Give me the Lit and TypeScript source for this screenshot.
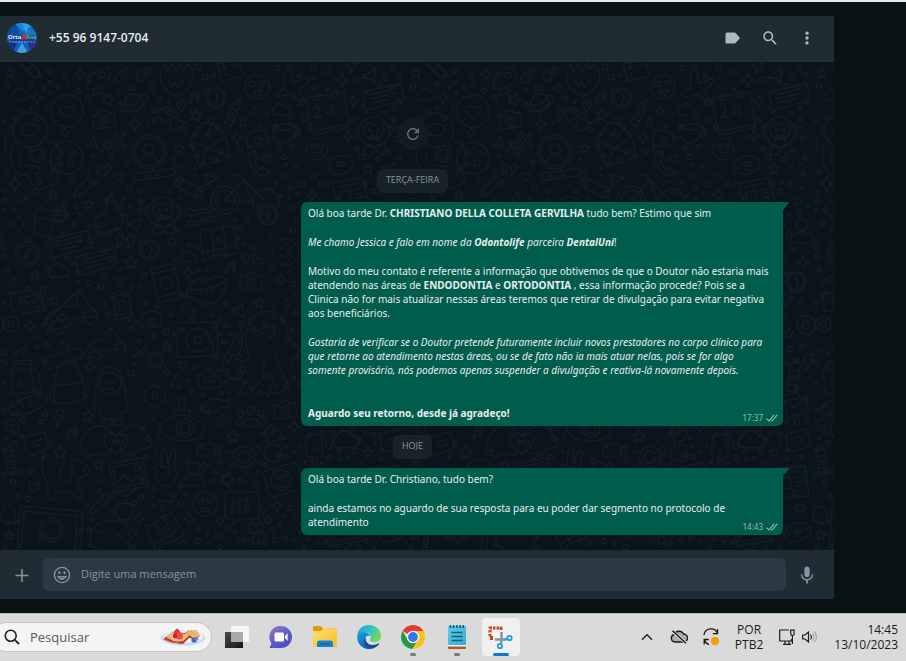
import { LitElement, html, svg, css } from "lit";
import { customElement } from "lit/decorators.js";

/* ---------- wallpaper doodles ---------- */

const ring = (x: number, y: number, r: number) =>
  `M${x - r} ${y}a${r} ${r} 0 1 0 ${2 * r} 0a${r} ${r} 0 1 0 ${-2 * r} 0`;

const flower = (n: number, r: number, k: number) => {
  let d = "";
  for (let i = 0; i <= n; i++) {
    const a = (i / n) * Math.PI * 2;
    const x = (Math.cos(a) * r).toFixed(1);
    const y = (Math.sin(a) * r).toFixed(1);
    d += i ? `A${k} ${k} 0 0 1 ${x} ${y}` : `M${x} ${y}`;
  }
  return d;
};

const HEART = "M0 4C-8-2-3-6 0-2C3-6 8-2 0 4z";

const SHAPES: Record<string, string> = {
  star: "M0-5L1.6-1.6 5.2-1.4 2.4 1.2 3.2 4.8 0 3-3.2 4.8-2.4 1.2-5.2-1.4-1.6-1.6z",
  spark: "M0-6Q.8-.8 6 0Q.8.8 0 6Q-.8.8-6 0Q-.8-.8 0-6z",
  heart: HEART,
  cloud: "M-6 5a4 4 0 0 1 0-7a6 6 0 0 1 11-1a4 4 0 0 1 1 8z",
  capsule: "M-3-6a3 3 0 0 1 6 0V6a3 3 0 0 1-6 0zM-3 0H3",
  rocket: "M-12 10C-14 2-6-12 8-12C14-2 6 8-6 10zM-9 2L-14 2-10-6-4-6M2 8L2 14-6 16-7 10" + ring(2, -4, 3),
  comet: "M-6 6a4 4 0 0 0 6 0L8-6M-6 6a4 4 0 0 1 0-6L4-8M-1 1L6-8",
  flame: "M0 15C-24 2-16-12-12-18L-10-10-4-19-1-11 5-20 6-12 12-18C18-10 22 2 0 15zM-8-2L-5 5-2 0 1 5 5 0 8-3",
  calc: "M-13-8L8-12 14 4-8 9zM-8-4L-4-5M-6-6.500L-5.500-2.500M2-6L6-7M-6 3L-3 2",
  emoji: ring(0, 0, 12) + "M-7-1C-11-5-6-7-5-4C-3-7 0-4-3 0zM3-2C0-6 4-7 5-5C8-7 9-4 6-1zM-4 4Q1 5 5 3Q4 9 0 8Q-3 8-4 4",
  plane: "M-3-19C1-20 3-10 3-5L14-10C20-11 20-6 16-5L8 1 14 12 11 14 1 5-12 8-14 5-5-1C-7-8-6-16-3-19z",
  badge: flower(13, 15, 4) + "M0 7C-13-2-5-8 0-3C5-8 13-2 0 7z",
  planet: ring(0, 0, 9) + "M-8-1C-22 14 2 8 10 1C20-8 8-8 6-7M-8 2Q0 4 8-4",
  pin: "M0 6C-6-1-5-6 0-6C5-6 6-1 0 6z" + ring(0, -2, 1.5),
  music: "M-3 4V-4L4-6V2M-3-1L4-3" + ring(-4.5, 4, 1.6) + ring(2.5, 2, 1.6),
  clock: ring(0, 0, 10) + ring(0, 0, 8) + "M-1-5Q5 0-1 5L2 0z" + ring(-9, -8, 2),
  bottle: "M-4-10H4V14H-4zM-4-4H4M-4 8H4M-2-10V-14H2V-10M0 0q-3 4 0 5q3-1 0-5",
  camera: "M-11-6H-4L-3-9H4L5-6H11V8H-11z" + ring(0, 1, 5) + ring(0, 1, 2) + "M-9-4H-7",
  glasses: "M-16-10L-2-8Q0-10 2-8L14-7M-16-10C-17 0-6 4-2-6M0-6C-2 6 8 10 12-4M-14-9L-10-14 4-12M12-5L15-11",
  envelope: "M-20-4L-8-22Q0-24 6-18L16-8 20 12-10 22zM-20-4L-2 3 16-8M-10 22L-2 3 20 12M-6-8L0-16M-2-5L6-14",
  drop: "M0-4C4 1 3 4 0 4C-3 4-4 1 0-4z",
  cup: "M-12-5Q0-12 12-7Q8 10-2 10Q-10 10-12-5zM-12-5Q0 0 12-7M11-4C18-6 16 4 8 4",
  cushion: "M-9 7C-14-4-6-9 0-9C8-9 13-4 9 7zM1 5C-5 1-2-3 1 0C4-3 8 1 1 5z",
  astro: ring(-3, -20, 17) + "M-12-18C-12-28 4-28 6-22C6-14-6-12-12-18zM-17-10C-26 0-22 14-18 20C-14 30-6 20-4 28C0 42 12 40 14 36C30 36 28 22 18 18L18 8M-13 2V16L4 16C10 20 6 24 2 24M14-8C30-8 32 14 18 20" + ring(4, 4, 8) + ring(4, 4, 5) + "M-20-18C-30-16-30-4-26 4",
  cookie: ring(0, 0, 16) + ring(-6, -5, 2) + ring(4, 5, 3) + ring(7, -5, 2) + ring(-6, 6, 2) + "M-2-10l3-1M-10 0l2 2M1-2l2 1",
  tri: "M-5 4L2-6 5 5 1 2z",
  checks: "M-11 3L-5 9 4-8 1-9-5 3-9 1zM-1 8L3 10 12-7 9-8z",
  person: ring(0, 0, 17) + ring(0, 0, 14) + ring(0, -3, 5) + "M-9 10C-7 2 7 2 9 10",
  call: "M-9-12C-14-8-6 12 6 12L9 8 4 3 1 5C-3 2-4-1-4-4L-1-7-4-13z",
  quote: "M-6-2a3 3 0 1 1 4 2q0 4-5 5q3-2 2-4zM3-2a3 3 0 1 1 4 2q0 4-5 5q3-2 2-4z",
  pill: "M-20-1Q-20-4-17-4L17-4Q20-4 20-1Q20 3 17 3L-17 3Q-20 3-20-1z" + ring(-10, 0, 1) + ring(-4, 0, 1) + ring(2, 0, 1),
  cursor: "M-6-6L8 0-6 6-3 0z",
  pencil: "M-4-12H4V8L0 14-4 8zM-4-8H4M-4 8H4",
  bike: ring(-15, 12, 14) + ring(-15, 12, 10) + ring(26, 14, 13) + "M-15 12L4-8 26 14M-15 12L12 14 4-8 0-14-8-12M18-6L28-6",
  calendar: "M-20-14L18-20 23 12-14 20zM-12-18v6h5v-6zM6-21v6h5v-6zM-14 20L-12 23 22 16 23 12M-13-3Q-8-9-6-3Q-8 3-12 6L-4 4M6-6L0 2 9 0M7-6L8 5",
  note: "M-20-6L16-14Q20-14 20-10L22 2-14 12-20 10-17 6zM-12-3L12-9M-12 1L14-5M-10 5L8 1",
  monkey: ring(0, 0, 15) + "M-10-2C-10-12-1-10 0-6C2-10 11-12 10-2C10 10-10 10-10-2zM-5 9L-2 2 0 8 3 2 5 9M-14-5C-20-8-20 4-14 5M14-5C20-8 20 4 14 5" + ring(-4, -2, 1) + ring(4, -2, 1) + ring(-5, 18, 5) + ring(7, 17, 5),
  donut: "M-13 3C-14-6-2-11 6-9C16-6 14 3 6 7C-2 12-12 10-13 3zM-4 0Q0-5 4-2Q2 3-4 0M-8 2l-2 2M0 5l3 0M8-4l2 1",
  news: "M-16-12L14-14 18 16-14 18zM-10-7L8-9M-10-2L-1-3 0 8-9 9zM4-2L11-3M5 2L11 1M5 6L12 5",
  thumb: "M-13 2L-7-2C-1-6 0-14-2-20C8-24 8-12 7-6C18-6 14 10 10 12L-5 16Q-14 16-13 2zM-12 6H-4M-12 10H-4",
  glass: "M-10-12L12-10 4 16-12 12zM-10-4L9 0M-2-12L-8-16" + ring(14, -6, 8) + ring(14, -6, 6) + "M14-12V0M8-6H20",
  wrench: "M-14 0C-18-6-8-6-7-2L6-4C8-9 14-6 14-4C12 0 7 0 6-1L-6 2C-8 4-12 4-14 0zM-12 12C-14 6-6 7-5 9L8 5C12 1 15 4 14 7C12 10 8 9 7 8L-5 12z",
  compass: ring(0, 0, 12) + ring(0, 0, 9) + ring(0, -14, 3) + "M-3 5L-1-1 4-6 2 1z",
  map: "M-18-14L-6-12 5-17 16-16 20 10 8 13-4 12-15 18zM-6-12L-4 12M5-17L8 13M-16 10C-4 4 8 10 18-2" + ring(1, -2, 3),
  mobile: "M-11-17H9Q12-17 12-14V15Q12 18 9 18H-9Q-12 18-12 15V-14Q-12-17-9-17M-12-12H12M-12 12H12" + ring(0, 0, 6),
  lips: "M-20-1C-12-14-8-14-1-10C6-16 12-16 20-12C18 12 2 16-6 12C-14 10-16 4-20 5L-20-1C-8-2 8 0 20-12M-6-2V3M0-3V3M6-4V2",
  mails: "M-17-8L7-12 9-6M-17-8L-14 10-8 9M-7-4L14-8 18 8-4 12zM-7-4L4 3 14-8",
  scooter: ring(-14, 15, 7) + ring(18, 5, 7) + "M-27 10C-24-2-12-6-2-6L4-8 7-22 1-16M7-22L14-12C16-4 26-2 26 4L2 6C-2 18-20 20-27 10zM-16 6Q-8 0-4 6Q-10 10-16 6",
  card: "M-9-10L7-14 10 10-6 13zM-4-4Q0-8 4-5Q4 2-1 2Q-5 1-4-4M-4 8L4 7",
  gear: flower(8, 7, 3) + ring(0, 0, 3),
  deck: "M-20-17L19-18 20 16-21 17z" + ring(0, 0, 12) + ring(0, 0, 4) + "M8-6L15 2V14" + ring(-16, -10, 2),
  octo: "M-16 0C-26-30-10-46 2-46C18-46 26-28 20-14C30-18 40-10 30 0C22 4 26 14 34 10M-16 0C-22 8-30 6-26-4C-22-12-20-22-24-26C-34-20-30-12-38-4C-50 18-36 24-20 22C-14 26-26 30-26 36C-10 42-8 20 4 18C16 22 0 32 6 36C20 38 28 24 18 20C20 14 10 6 12-2M-12-26L10-32Q12-20 4-20L1-24-4-24Q-10-16-12-26M2 0Q-4 8 0 18" + ring(-27, 0, 3) + ring(-22, 12, 3),
  lens: ring(0, 0, 8) + ring(0, 0, 5) + "M5 6L12 16 15 13 8 4M-18-6q4-6 5 0q-2 6-5 0M-12-11q4-4 4 2",
  bloom: flower(6, 9, 5) + ring(0, 0, 3),
  milk: "M-14-8L6-9 9 14-12 16zM-14-8L-9-14 6-14 14-4 16 11 9 14M-9-14V-17L6-18V-14M6-9L6-14M-4 2q-4 6 0 7q4-1 0-7",
  pack: "M-13 20C-16-2-12-20 0-22C12-20 16 0 18 16Q2 24-13 20zM-14 4L16 0M-13 8C-22 6-18 18-13 20M17 4C24 2 22 14 18 14M-24-24L12-34Q16-28 14-24L-20-12Q-26-16-24-24z",
  hood: "M-16 10C-14-30-10-34 0-34C14-34 14-16 18 8Q18 12 12 12L11 18Q0 20-9 16L-10 10zM-6 18V24H2V18M4 18V24H12V18" + ring(0, -18, 11) + "M-5-18q2-2 3 0M3-18q2-2 3 0M-3-13q3 3 6 0",
  sub: "M-20 0C-18-12 0-16 12-10C28-4 26 10 12 12C-6 16-20 8-20 0zM-8-11L-6-18H8L9-11M-2-18V-30H4V-18" + ring(4, 0, 9) + ring(4, 0, 5) + "M-20 0L-26-8M-20 0L-25 10",
  fish: "M-14 6C-10-6 4-8 10-2L16-5 14 4 8 3C2 10-8 10-14 6zM-8 0Q-4 4-6 8",
  people: ring(0, -6, 4) + ring(-10, -3, 3) + ring(10, -4, 3) + "M-9 9C-8-1 8-1 9 9zM-9 7H-15Q-15 1-9 1M9 7H15Q15 0 9 0",
  bread: "M-18 8C-24 0-12-4 6-10C20-14 24-4 14 2C2 8-12 14-18 8zM-8-4l3 6M0-7l3 6M8-10l3 6",
  bolt: "M-2-8L5-8 2-2 6-2-3 9-1 2-5 2z",
  leaf: "M-10-8C4-12 10-4 8 8C-4 8-10 2-10-8zM-8-6L14 16M0 0V6M-2-3H4",
  chat: "M-12-6L8-11 13 4-4 12-10 10zM-4-1L6-4M-3 4L5 1",
  hands: "M-36 8C-34-10-20-18-10-12L0-4C8-14 18-18 26-12C34-2 40 6 32 8C26 6 20 16 10 14C2 12 4 4 8 2C2 0-6 2-4 10C-4 18-14 14-20 14C-28 18-36 16-36 8zM-12 0C-12-8-2-8 0-3C4-8 12-6 12 0C10 8 4 10 0 14C-6 10-12 6-12 0zM0 4C-5 1-3-2 0 1C3-2 5 1 0 4z",
  video: "M-11-6H7V6H-11zM7-1L12-4V6L7 3" + ring(-7, -3, 1),
  turtle: flower(7, 10, 6) + ring(0, 0, 6) + "M9-7C16-16 18-4 12-4M-9 5L-15 10M-9-5L-17-4M2 10L2 18M10 4L17 8",
  plant: ring(0, 8, 9) + "M-4 0L-6-18Q0-22 1-14Q8-18 8-10Q6-4 0-4M-6-18Q-12-10-4-6",
  dog: "M-10-8C-8-22 6-24 14-16C22-14 20-2 8-2L8 6 13 14 10 20 4 14-8 10-16 14-16 20H-22L-22 4C-28-6-30-16-26-24M-10-8C-14 4 2 6 2-6L2-18" + ring(14, -10, 1),
  photo: "M-19-12L14-18 20 10-14 16zM-15-9L12-14 16 7-12 12zM-12 9L-4-1 4 6 9 0 15 5M-4-15L6-21 11-17M-10 16L-2 21 8 12" + ring(9, -8, 3),
  peace: "M-10 0C-14-6-6-8-5-3L-4-19Q0-22 1-18L2-6 6-19Q11-20 10-16L8-2C14 6 8 16 0 16C-8 16-10 8-10 0zM-4-3L4-2 4 4",
  user: ring(0, -10, 6) + "M-12 8C-12-6 12-8 12 8z",
  smile: "M-18-8L14-18 18-14 20 12 14 10-8 18-12 14zM-4 5q6 4 10 0q-1 6-5 5" + ring(0, 0, 10) + ring(-2, -3, 2) + ring(4, -4, 2),
  apple: "M0-6C8-10 12 0 6 8Q0 12-5 8C-12 0-8-10 0-6zM0-6Q0-10 4-11",
  box: "M-17-12Q-17-14-14-14H14Q17-14 17-11V11Q17 13 14 13H-2L-9 18-10 13H-14Q-17 13-17 10zM-10-7V7H-8V1H-4V7H-2V-7H-4V-2H-8V-7zM3-2V7H6V-2zM3-7V-5H6V-7z",
  laptop: "M-30-22L28-17Q32-16 32-12L29 26H-34L-31-20zM-27-17L26-12 24 22M-27-17L-30 22M-12 12L-9 3" + ring(0, 2, 12) + ring(0, 2, 9),
  bell: "M-8 4C-6-2-6-8 0-10C7-10 6-2 8 8zM-3 6Q0 10 3 7",
  dino: "M-20 6C-22-12-6-18 8-14L10-18 13-12 17-14 17-7 21-7 18-1 22 2 18 6V20H-10C-6 12-20 12-20 6zM-14-4q3-2 4 0M6 0q3-3 5 1",
  clover: "M0 0C-12-4-8-14 0-8C8-14 12-4 0 0C12-2 14 10 4 8C2 14-10 10 0 0M0 0C-14-2-14 8-6 9M1 2L5 14",
  cross: "M-5-1L-1-1 0-5 2-1 6 0 2 2 1 6-1 2z",
  icecream: "M-8 10V-6C-8-16 8-16 8-6V10zM-2 10V18H3V10M-4 0q4 5 8 0",
};

type Doodle = [string, number, number, number?, number?];

const DOODLES: Doodle[] = [
  ["star", 10, 73], ["capsule", 30, 68, -45, 1.3], ["rocket", 100, 79], ["comet", 122, 76], ["comet", 144, 74, 10],
  ["flame", 177, 82], ["calc", 230, 72], ["emoji", 257, 87], ["plane", 290, 89], ["cloud", 20, 95], ["spark", 37, 98],
  ["badge", 67, 111], ["star", 108, 99, 20, 1.2], ["planet", 134, 103], ["pin", 181, 106], ["music", 195, 97], ["clock", 216, 98],
  ["bottle", 233, 113, 25, 0.9], ["star", 196, 115, 10, 1.2], ["cloud", 280, 110], ["camera", 104, 120, -8], ["spark", 135, 124, 0, 1.1],
  ["glasses", 170, 124, 25], ["envelope", 210, 145], ["drop", 254, 110], ["drop", 243, 122], ["cup", 285, 133],
  ["spark", 237, 138], ["cushion", 257, 139], ["astro", 33, 150], ["cookie", 67, 158], ["spark", 65, 133, 0, 0.8],
  ["tri", 92, 143], ["checks", 114, 141], ["person", 149, 152], ["star", 179, 148], ["call", 259, 164], ["heart", 267, 159, -15],
  ["quote", 102, 170], ["heart", 119, 177], ["pill", 155, 175, -8], ["cursor", 210, 179, -10], ["pencil", 84, 187, 45],
  ["pencil", 189, 188, -60, 1.2], ["bike", 240, 188], ["star", 53, 195], ["spark", 15, 184, 0, 1.2], ["spark", 80, 74],
  ["calendar", 326, 112], ["spark", 342, 80, 0, 1.2], ["note", 382, 98], ["spark", 353, 101], ["monkey", 374, 132],
  ["emoji", 317, 149, 0, 0.9], ["donut", 341, 165], ["star", 368, 169], ["spark", 348, 136], ["news", 350, 193, -8],
  ["tri", 370, 75, 20, 1.4], ["bolt", 352, 65], ["spark", 152, 88, 0, 0.8], ["thumb", 108, 217], ["glass", 46, 221],
  ["star", 89, 204], ["cursor", 136, 224, -50], ["monkey", 163, 212], ["wrench", 200, 213], ["clock", 268, 215],
  ["compass", 27, 254], ["note", 69, 245], ["note", 95, 263], ["quote", 124, 242, 0, 1.2], ["clock", 150, 250],
  ["star", 172, 241, 10], ["map", 218, 243], ["cookie", 286, 252, 0, 0.8], ["cloud", 187, 257], ["star", 131, 262, 0, 1.3],
  ["cloud", 58, 271, 0, 1.2], ["star", 35, 275], ["capsule", 15, 281, 60, 0.8], ["heart", 120, 283], ["mobile", 166, 283, -12],
  ["spark", 188, 273], ["lips", 207, 291], ["camera", 251, 282], ["spark", 281, 280], ["music", 231, 268], ["quote", 249, 260],
  ["mails", 27, 302], ["star", 54, 300], ["scooter", 72, 312], ["card", 122, 307], ["cushion", 151, 320], ["spark", 30, 326],
  ["gear", 11, 324], ["cursor", 240, 311, 60], ["star", 259, 303], ["deck", 198, 340], ["octo", 265, 357], ["scooter", 106, 345, 0, 0.8],
  ["lens", 155, 360], ["bloom", 155, 396], ["star", 167, 347], ["heart", 183, 365], ["milk", 25, 378], ["pack", 68, 382],
  ["hood", 110, 401], ["spark", 90, 367], ["mails", 209, 381, 0, 0.7], ["sub", 181, 428], ["fish", 214, 404],
  ["people", 251, 417], ["camera", 285, 410, -8], ["bread", 28, 405], ["bolt", 59, 418], ["star", 88, 416, 10, 1.1],
  ["leaf", 12, 427, 0, 0.8], ["chat", 36, 443], ["music", 72, 433], ["hands", 116, 440], ["gear", 223, 421, 0, 0.8],
  ["star", 233, 436, 0, 1.2], ["video", 208, 450], ["turtle", 244, 457], ["plant", 273, 445], ["star", 60, 452, 0, 1.3],
  ["bottle", 10, 460, -5], ["dog", 70, 480], ["star", 99, 465], ["photo", 128, 476], ["peace", 166, 470], ["user", 193, 478],
  ["star", 227, 479, 20, 1.4], ["cross", 203, 466], ["smile", 281, 480], ["heart", 34, 487, 0, 1.2], ["pencil", 99, 505, 45, 0.9],
  ["apple", 124, 510], ["cursor", 165, 504, -20], ["emoji", 205, 504], ["box", 242, 506], ["laptop", 51, 528], ["star", 9, 535],
  ["bell", 8, 516], ["dino", 110, 536], ["map", 164, 532, -20, 0.9], ["clover", 256, 533], ["spark", 277, 506],
  ["spark", 139, 519], ["spark", 189, 519], ["spark", 294, 427], ["icecream", 314, 447], ["cloud", 345, 440, 0, 1.5],
  ["star", 368, 452], ["chat", 392, 440], ["user", 396, 235], ["spark", 397, 262], ["bolt", 381, 300], ["gear", 400, 325, 0, 1.2],
  ["star", 383, 333], ["clock", 390, 282], ["bottle", 388, 375, 8, 1.2], ["bolt", 402, 362], ["mails", 385, 405],
  ["news", 385, 480], ["heart", 394, 508], ["cup", 330, 510], ["star", 360, 500], ["spark", 300, 528], ["photo", 345, 530],
  ["donut", 392, 532], ["emoji", 330, 225], ["star", 360, 210], ["spark", 312, 195],
];

const DOTS = (() => {
  let seed = 7;
  const rnd = () => ((seed = (seed * 16807) % 2147483647) / 2147483647);
  const big = new Set(["astro", "octo", "laptop", "hands", "bike", "dog", "hood", "pack", "sub", "scooter"]);
  const placed: number[][] = DOODLES.map(([n, x, y]) => {
    const len = SHAPES[n].length;
    return [x, y, big.has(n) ? 26 : len > 95 ? 17 : 8];
  });
  let d = "";
  for (let i = 0; i < 5000; i++) {
    const x = Math.round(rnd() * 398) + 4;
    const y = Math.round(rnd() * 482) + 66;
    const r = 1.2 + Math.round(rnd() * 4) / 2.2;
    if (placed.every(([a, b, c]) => Math.hypot(a - x, b - y) > c + r + 2)) {
      placed.push([x, y, r + 2]);
      d += ring(x, y, r);
    }
  }
  return d;
})();

@customElement("chat-wallpaper")
class ChatWallpaper extends LitElement {
  static styles = css`
    :host { display: block; overflow: hidden; }
    svg { display: block; width: 100%; height: 100%; }
    .ink { fill: none; stroke: #161e25; stroke-width: 1.1; stroke-linejoin: round; stroke-linecap: round; }
  `;
  render() {
    return html`<svg aria-hidden="true">
      <defs>
        <pattern id="tile" width="406" height="490" patternUnits="userSpaceOnUse">
          <g class="ink" transform="translate(0 -62)">
            ${DOODLES.flatMap(([n, x, y, a = 0, s = 1]) =>
              (x < 30 ? [x, x + 406] : x > 376 ? [x, x - 406] : [x]).map(
                (px) => svg`<path d=${SHAPES[n]} transform=${`translate(${px} ${y}) rotate(${a}) scale(${s})`}></path>`
              )
            )}
            <path d=${DOTS}></path>
          </g>
        </pattern>
      </defs>
      <rect width="100%" height="100%" fill="url(#tile)"></rect>
    </svg>`;
  }
}

/* ---------- chat ---------- */

const avatar = html`<svg class="avatar" viewBox="0 0 30 30" role="img" aria-label="Orto Rise">
  <defs><clipPath id="disc"><circle cx="15" cy="15" r="15"></circle></clipPath></defs>
  <g clip-path="url(#disc)">
    <rect width="30" height="30" fill="#1263b5"></rect>
    <path fill="#1d86d6" d="M8 0h14l-6 9z"></path>
    <path fill="#2aa0e6" d="M15 0l10 2-6 9z"></path>
    <path fill="#0d4c9c" d="M0 4l9-3 3 11-12 2z"></path>
    <path fill="#1a75c9" d="M22 3l8 9-12 1z"></path>
    <path fill="#152f86" d="M0 18l10 2-4 10-6-4z"></path>
    <path fill="#2c2f94" d="M20 19l10-2v9l-6 4z"></path>
    <path fill="#4a9be0" d="M15 20l6 10H9z"></path>
    <path fill="#0f3f91" d="M3 12h24v6H3z"></path>
    <text x="1" y="16" font-family="Noto Sans, sans-serif" font-size="6" font-weight="600" fill="#fff">Orto</text>
    <path d="M15 17l4-6M15.500 12l4 4" stroke="#e0283c" stroke-width="1.600"></path>
    <text x="19" y="16" font-family="Noto Sans, sans-serif" font-size="5" font-weight="600" fill="#6cc04a">Rise</text>
    <path d="M2 19h26" stroke="#b9cbe8" stroke-width="1" stroke-dasharray="2 1" opacity=".6"></path>
  </g>
</svg>`;

const ticks = html`<svg class="ticks" viewBox="0 0 12 8" aria-label="Entregue">
  <path d="M.6 4.600L3 7 8 .8M5.200 6.400L5.900 7 11.200 .8" fill="none" stroke="#8fbdb0" stroke-width="1.100"></path>
</svg>`;

@customElement("chat-panel")
class ChatPanel extends LitElement {
  static styles = css`
    :host { display: flex; flex-direction: column; font-family: "Open Sans", "Noto Sans", sans-serif; font-size: 11px; color: #e9edef; }
    button { appearance: none; border: 0; background: none; padding: 0; display: grid; place-items: center; color: inherit; }
    .icon { width: 18px; height: 18px; display: block; fill: currentColor; }
    header { display: flex; align-items: center; height: 44px; padding: 0 18px 0 7px; background: #202c33; border-bottom: 2px solid #222e35; }
    .avatar { width: 30px; height: 30px; }
    h1 { flex: 1; margin: 0 0 0 12px; font-size: 12px; line-height: 16px; font-weight: 600; }
    .tools { display: flex; gap: 19px; color: #aebac1; }
    main { position: relative; flex: 1; display: flex; flex-direction: column; justify-content: flex-end; background: #0b141a; padding: 16px 0 15px; }
    chat-wallpaper { position: absolute; inset: 0; }
    .log { position: relative; display: flex; flex-direction: column; }
    .refresh { width: 32px; height: 32px; border-radius: 50%; background: #111b21; color: #5f6f78; align-self: center; margin: 0 9px 19px 0; }
    .day { align-self: center; margin: 0 9px 9px 0; padding: 0 9px 2px; border-radius: 6px; background: #182229; color: #8696a0; font-size: 9px; line-height: 22px; }
    .msg { position: relative; align-self: flex-end; box-sizing: border-box; width: 58%; max-width: 482px; margin: 0 51px 9px 0; padding: 4px 7px 6px; background: #005c4b; border-radius: 6px 0 6px 6px; display: grid; font-family: "Noto Sans", "Open Sans", sans-serif; font-size: 10px; line-height: 14px; }
    .msg:last-child { margin-bottom: 0; }
    .msg::after { content: ""; position: absolute; left: 100%; top: 0; width: 6px; height: 8px; background: #005c4b; clip-path: polygon(0 0, 80% 0, 100% 12%, 0 100%); }
    .text { grid-area: 1 / 1; display: grid; gap: 15px; }
    .text p { margin: 0; white-space: nowrap; }
    .text .last { margin-top: 14px; }
    .meta { grid-area: 1 / 1; place-self: end; display: flex; align-items: center; gap: 3px; font-size: 8px; line-height: 10px; color: #99beb7; margin: 0 -2px -3px 0; }
    .ticks { width: 12px; height: 8px; }
    footer { display: flex; align-items: center; height: 49px; padding: 0 18px 0 13px; background: #202c33; color: #8696a0; }
    .field { flex: 1; display: flex; align-items: center; gap: 10px; height: 33px; margin: 0 12px; padding: 0 10px; border-radius: 6px; background: #2a3942; }
    .field input { flex: 1; min-width: 0; border: 0; padding: 0 0 2px; outline: 0; background: none; font: inherit; line-height: 16px; color: #e9edef; }
    .field input::placeholder { color: #8696a0; opacity: 1; }
  `;

  render() {
    return html`
      <header>
        ${avatar}
        <h1>+55 96 9147-0704</h1>
        <div class="tools">
          <button aria-label="Etiquetas"><svg class="icon" viewBox="0 0 18 18"><path d="M3 3.500h7.300c.7 0 1.200.3 1.600.8L16 9l-4.100 4.700c-.4.5-.9.8-1.600.8H3A1.500 1.500 0 0 1 1.500 13V5A1.500 1.500 0 0 1 3 3.500z"></path></svg></button>
          <button aria-label="Pesquisar"><svg class="icon" viewBox="0 0 24 24"><path d="M15.900 14.300H15l-.3-.3c1-1.100 1.600-2.700 1.600-4.300 0-3.700-3-6.700-6.700-6.700S3 6 3 9.700s3 6.700 6.700 6.700c1.600 0 3.200-.6 4.300-1.600l.3.3v.8l5.100 5.100 1.500-1.500-5-5.200zm-6.200 0c-2.600 0-4.600-2.100-4.600-4.600s2.100-4.600 4.600-4.600 4.600 2.100 4.600 4.600-2 4.600-4.600 4.600z"></path></svg></button>
          <button aria-label="Mais opções"><svg class="icon" viewBox="0 0 24 24"><circle cx="12" cy="5.500" r="2.200"></circle><circle cx="12" cy="12" r="2.200"></circle><circle cx="12" cy="18.500" r="2.200"></circle></svg></button>
        </div>
      </header>
      <main>
        <chat-wallpaper></chat-wallpaper>
        <div class="log">
          <button class="refresh" aria-label="Carregar mensagens"><svg class="icon" viewBox="0 0 24 24"><path d="M17.650 6.350C16.200 4.900 14.210 4 12 4c-4.420 0-7.990 3.580-7.990 8s3.570 8 7.990 8c3.730 0 6.840-2.550 7.730-6h-2.080c-.82 2.330-3.040 4-5.650 4-3.310 0-6-2.690-6-6s2.690-6 6-6c1.660 0 3.140.69 4.220 1.780L13 11h7V4l-2.350 2.350z"></path></svg></button>
          <div class="day">TERÇA-FEIRA</div>
          <article class="msg">
            <div class="text">
              <p>Olá boa tarde Dr. <b>CHRISTIANO DELLA COLLETA GERVILHA</b> tudo bem? Estimo que sim</p>
              <p><i>Me chamo Jessica e falo em nome da <b>Odontolife</b> parceira <b>DentalUni</b></i>!</p>
              <p>Motivo do meu contato é referente a informação que obtivemos de que o Doutor não estaria mais<br />atendendo nas áreas de <b>ENDODONTIA</b> e <b>ORTODONTIA</b> , essa informação procede? Pois se a<br />Clinica não for mais atualizar nessas áreas teremos que retirar de divulgação para evitar negativa<br />aos beneficiários.</p>
              <p><i>Gostaria de verificar se o Doutor pretende futuramente incluir novos prestadores no corpo clínico para<br />que retorne ao atendimento nestas áreas, ou se de fato não ia mais atuar nelas, pois se for algo<br />somente provisório, nós podemos apenas suspender a divulgação e reativa-lá novamente depois.</i></p>
              <p class="last"><b>Aguardo seu retorno, desde já agradeço!</b></p>
            </div>
            <div class="meta"><time>17:37</time>${ticks}</div>
          </article>
          <div class="day">HOJE</div>
          <article class="msg">
            <div class="text">
              <p>Olá boa tarde Dr. Christiano, tudo bem?</p>
              <p>ainda estamos no aguardo de sua resposta para eu poder dar segmento no protocolo de<br />atendimento</p>
            </div>
            <div class="meta"><time>14:43</time>${ticks}</div>
          </article>
        </div>
      </main>
      <footer>
        <button aria-label="Anexar"><svg class="icon" viewBox="0 0 18 18"><path d="M8.200 3h1.600v5.700h5.700v1.600H9.800V16H8.200v-5.700H2.500V8.700h5.700z"></path></svg></button>
        <div class="field">
          <button aria-label="Emojis"><svg class="icon" viewBox="0 0 18 18"><circle cx="9" cy="9" r="7.600" fill="none" stroke="currentColor" stroke-width="1.400"></circle><ellipse cx="6.500" cy="6.700" rx="1.100" ry="1.400"></ellipse><ellipse cx="11.500" cy="6.700" rx="1.100" ry="1.400"></ellipse><path d="M4 9.600c1.500.7 8.500.7 10 0-.3 2.500-2.300 4.200-5 4.200s-4.700-1.700-5-4.200zm1.400 1.300c.5.700 1 .9 3.600.9s3.100-.2 3.600-.9c-1.900.3-5.300.3-7.200 0z"></path></svg></button>
          <input type="text" aria-label="Digite uma mensagem" placeholder="Digite uma mensagem" />
        </div>
        <button aria-label="Mensagem de voz"><svg class="icon" viewBox="0 0 24 24"><path d="M12 14.900c2 0 3.500-1.500 3.500-3.500v-7c0-2-1.500-3.600-3.500-3.600S8.500 2.400 8.500 4.400v7c0 2 1.500 3.500 3.500 3.500zm6.200-3.500c0 3.500-2.900 6-6.200 6s-6.200-2.500-6.200-6h-2c0 4 3.200 7.300 7 7.900v3.900h2.400v-3.900c3.900-.6 7-3.900 7-7.900z"></path></svg></button>
      </footer>
    `;
  }
}

/* ---------- taskbar ---------- */

const taskView = svg`
  <defs><linearGradient id="dk" x1="0" y1="0" x2="1" y2="1"><stop offset="0" stop-color="#4a4a4a"></stop><stop offset="1" stop-color="#161616"></stop></linearGradient></defs>
  <rect x="1" y="8" width="18" height="16" fill="url(#dk)"></rect>
  <rect x="7" y="2" width="18" height="16" fill="#f6f6f6"></rect>
  <rect x="7" y="8" width="12" height="10" fill="#a9a9a9"></rect>`;

const chatApp = svg`
  <defs><linearGradient id="ch" x1="0" y1="0" x2=".6" y2="1"><stop offset="0" stop-color="#9c7ac4"></stop><stop offset=".6" stop-color="#5b5bc9"></stop><stop offset="1" stop-color="#4a4fc0"></stop></linearGradient></defs>
  <path d="M13 2a11 11 0 1 1 0 22H1.500l2-4.500A11 11 0 0 1 13 2z" fill="url(#ch)"></path>
  <rect x="6.500" y="8.500" width="9.500" height="9" rx="1.500" fill="#fff"></rect>
  <path d="M17 12l2.600-2.700v7.400L17 14z" fill="#fff"></path>`;

const folder = svg`
  <defs><linearGradient id="fo" x1="0" y1="0" x2="1" y2="1"><stop offset="0" stop-color="#ffdf70"></stop><stop offset="1" stop-color="#fbbd23"></stop></linearGradient></defs>
  <path d="M1 3.500A1.500 1.500 0 0 1 2.500 2h6l2.500 2.500H24a1 1 0 0 1 1 1V12H1z" fill="#dd9c0c"></path>
  <path d="M1 7h8l2.500-2.500H25V22a1 1 0 0 1-1 1H2a1 1 0 0 1-1-1z" fill="url(#fo)"></path>
  <path d="M5 23v-4a2.500 2.500 0 0 1 2.500-2.500h11A2.500 2.500 0 0 1 21 19v4z" fill="#1583d3"></path>
  <path d="M8.500 20h9" stroke="#0c5d9e" stroke-width="1.200"></path>`;

const edge = svg`
  <defs>
    <linearGradient id="e1" x1="0" y1="0" x2="1" y2=".4"><stop offset="0" stop-color="#1d9fe0"></stop><stop offset=".6" stop-color="#35c1c4"></stop><stop offset="1" stop-color="#6fd957"></stop></linearGradient>
    <linearGradient id="e2" x1="0" y1="0" x2=".4" y2="1"><stop offset="0" stop-color="#1b9de2"></stop><stop offset="1" stop-color="#0f63b8"></stop></linearGradient>
  </defs>
  <path d="M1.300 11C2 5 7 1 13 1c7 0 12 5 12 11 0 4-3 6-6.500 6-3 0-4.500-1-4.500-2 0-.8 1-1.200 1-3 0-2.500-2.500-5-6.500-5-4 0-6.500 1.500-7.200 3z" fill="url(#e1)"></path>
  <path d="M1.300 11C2.500 8.500 5.500 7.500 8.500 8c3.500.4 5.500 2.500 6 4.500C12 10.500 9.500 12 9.500 15c0 5 5 8.500 9.500 7.500C17 24.300 15 25 12.500 25 5.500 25 .5 18.500 1.300 11z" fill="url(#e2)"></path>
  <path d="M9.700 14c-.8 3.500 2.300 7 6.800 7 2.500 0 4.500-.7 6-1.700.7-.4 1 .2.600.8C21 23.300 17 25 13.500 24.800 9 24 6.500 17.500 9.700 14z" fill="#134a94"></path>`;

const chrome = svg`
  <path d="M13 13L2.600 7A12 12 0 0 1 23.400 7z" fill="#e33b2e"></path>
  <path d="M2.600 7A12 12 0 0 0 12.500 25L18.200 16 13 13 7.800 16z" fill="#279847"></path>
  <path d="M23.400 7A12 12 0 0 1 12.500 25L18.200 16 18.200 13 13 7z" fill="#fcc21c"></path>
  <circle cx="13" cy="13" r="6.200" fill="#fff"></circle><circle cx="13" cy="13" r="4.900" fill="#3478e5"></circle>`;

const notepad = svg`
  <defs><linearGradient id="np" x1="0" y1="0" x2="1" y2="1"><stop offset="0" stop-color="#5fd0ea"></stop><stop offset="1" stop-color="#39a9cf"></stop></linearGradient></defs>
  <rect x="4" y="21" width="18" height="4" rx="1" fill="#b05a1c"></rect><rect x="4" y="20.500" width="18" height="2" fill="#eef3f5"></rect>
  <rect x="4" y="2" width="18" height="19" rx="1" fill="url(#np)"></rect>
  <path d="M6.500 1v3M9.700 1v3M12.900 1v3M16.100 1v3M19.300 1v3" stroke="#155a70" stroke-width="1.600"></path>
  <path d="M7.500 8.500h11M7.500 12.500h11M7.500 16.500h11" stroke="#12637e" stroke-width="1.500"></path>`;

const snip = svg`
  <rect x=".5" y="2.500" width="13" height="12" fill="#f4f6f8"></rect>
  <path d="M2 14.500h3M2 12.500V10M2 8.500V6M2 4.500V2.500M2 4h2M5 4h2.500M8.500 4H11M11.800 4h1.200V6M2 13.500H5" fill="none" stroke="#d8400f" stroke-width="3"></path>
  <path d="M13.500 8v10M7 15.500h11" stroke="#8a9198" stroke-width="2.400"></path>
  <circle cx="12" cy="22" r="2.200" fill="none" stroke="#1e9be0" stroke-width="1.800"></circle>
  <circle cx="21.500" cy="14" r="2.200" fill="none" stroke="#1e9be0" stroke-width="1.800"></circle>
  <path d="M13 17.500v2.500M16.500 15.300h3" stroke="#2aa3e4" stroke-width="2"></path>`;

const APPS = [
  { name: "Visão de tarefas", art: taskView, state: "" },
  { name: "Chat", art: chatApp, state: "" },
  { name: "Explorador de Arquivos", art: folder, state: "" },
  { name: "Microsoft Edge", art: edge, state: "" },
  { name: "Google Chrome", art: chrome, state: "open" },
  { name: "Bloco de Notas", art: notepad, state: "open" },
  { name: "Ferramenta de Captura", art: snip, state: "active" },
];

@customElement("task-bar")
class TaskBar extends LitElement {
  static styles = css`
    :host { display: flex; align-items: center; box-sizing: border-box; height: 48px; padding-bottom: 1px; background: #dadada; border-top: 1px solid #b9bbbb; color: #1b1b1b; font-family: "Open Sans", "Noto Sans", sans-serif; font-size: 12px; overflow: hidden; }
    button { appearance: none; border: 0; background: none; padding: 0; color: inherit; font: inherit; display: grid; place-items: center; }
    svg { display: block; }
    .search { box-sizing: border-box; display: flex; align-items: center; width: 222px; height: 30px; margin: 0 6px 0 -10px; padding: 0 5px 0 13px; gap: 10px; border: 1px solid #c4c4c4; border-radius: 16px; background: #f4f4f4; }
    .search input { flex: 1; min-width: 0; border: 0; padding: 0 0 1px; outline: 0; background: none; font: inherit; font-size: 13px; color: #333; }
    .search input::placeholder { color: #5a5a5a; opacity: 1; }
    .apps { display: flex; gap: 6px; flex: 1; }
    .app { position: relative; width: 38px; height: 38px; border-radius: 4px; }
    .app svg { width: 26px; height: 26px; }
    .app.open::after, .app.active::after { content: ""; position: absolute; bottom: 0; left: 16px; width: 6px; height: 3px; border-radius: 2px; background: #7a7a7a; }
    .app.active { background: #f0f0f0; }
    .app.active::after { left: 11px; width: 16px; background: #0a78d4; }
    .tray { display: flex; align-items: center; padding-right: 8px; }
    .tray .slot { width: 32px; height: 32px; }
    .two { line-height: 15px; text-align: center; margin: 0 15px 0 8px; }
    .sound { margin-left: 5px; }
    .clock { line-height: 15px; text-align: right; margin-left: 15px; }
    .clock time { display: block; }
  `;

  render() {
    return html`
      <label class="search">
        <svg width="16" height="16" viewBox="0 0 16 16" aria-hidden="true"><circle cx="6.700" cy="6.700" r="5.500" fill="none" stroke="#222" stroke-width="1.600"></circle><path d="M10.600 10.600l4.400 4.400" stroke="#222" stroke-width="1.800"></path></svg>
        <input type="search" aria-label="Pesquisar" placeholder="Pesquisar" />
        <svg width="46" height="18" viewBox="0 0 46 18" aria-hidden="true">
          <ellipse cx="23" cy="10" rx="22.500" ry="7.500" fill="#cdd6f2"></ellipse>
          <ellipse cx="23" cy="9" rx="20" ry="6" fill="#eef1fb"></ellipse>
          <path d="M4 10L13 4l12 1 4-3 7 0 4 6-5 3-6-1-6 6-13-2z" fill="#b5442a"></path>
          <path d="M6 9L13 4l12 2 4-4 7 0 4 6-7 2-3-3-7 6-8 1z" fill="#e9bd78"></path>
          <path d="M27 4l5 5M31 3l5 5" stroke="#cf9a52" stroke-width="1"></path>
          <path d="M4 11l9 3 9 1" fill="none" stroke="#cf3a35" stroke-width="1.600"></path>
          <circle cx="17" cy="5" r="3.200" fill="#e2313b"></circle><circle cx="19.500" cy="8" r="3.500" fill="#ef4a4f"></circle><circle cx="15" cy="8" r="2.200" fill="#c9202d"></circle>
          <path d="M15 2l2-1.500 2 1.500" fill="#3f8b3a"></path>
          <circle cx="34" cy="12" r="2.600" fill="#4a63b5"></circle><circle cx="36.500" cy="11" r="1.800" fill="#6d82cc"></circle>
        </svg>
      </label>
      <nav class="apps" aria-label="Aplicativos">
        ${APPS.map((a) => html`<button class="app ${a.state}" aria-label=${a.name}><svg viewBox="0 0 26 26">${a.art}</svg></button>`)}
      </nav>
      <div class="tray">
        <button class="slot" aria-label="Ícones ocultos"><svg width="12" height="8" viewBox="0 0 12 8"><path d="M1 6.800L6 1.800l5 5" fill="none" stroke="#222" stroke-width="1.500"></path></svg></button>
        <button class="slot" aria-label="OneDrive"><svg width="18" height="14" viewBox="0 0 18 14"><path d="M5 12a3.800 3.800 0 0 1-.7-7.500A5 5 0 0 1 13.500 4 4 4 0 0 1 13.500 12z" fill="#aaa" stroke="#1a1a1a" stroke-width="1.400"></path><path d="M2 1l14 12" stroke="#dadada" stroke-width="3"></path><path d="M2.500 .8l13.500 12.400" stroke="#1a1a1a" stroke-width="1.400"></path></svg></button>
        <button class="slot" aria-label="Sincronização"><svg width="18" height="18" viewBox="0 0 18 18"><path d="M2 7a7 7 0 0 1 13.500-1.500M15.500 1v4.700h-4.700M7 16.500a7 7 0 0 1-4.500-4.500M2.200 16.500v-5h4.600" fill="none" stroke="#1a1a1a" stroke-width="1.300"></path><circle cx="13" cy="13" r="4.200" fill="#fb9a0b"></circle></svg></button>
        <button class="two" aria-label="Idioma do teclado">POR<br />PTB2</button>
        <button aria-label="Rede"><svg width="18" height="18" viewBox="0 0 18 18"><path d="M11 2H1.700v11H13.500V11M5 16.300h8M7 13v3M11 13v3" fill="none" stroke="#1a1a1a" stroke-width="1.200"></path><path d="M12.700 2.200h3.400v3.600a1.700 1.700 0 0 1-3.400 0zM14.400 7.500v8.500" fill="none" stroke="#1a1a1a" stroke-width="1.200"></path></svg></button>
        <button class="sound" aria-label="Volume"><svg width="18" height="16" viewBox="0 0 18 16"><path d="M1.700 6h2.300L7.500 3v10L4 10H1.700z" fill="none" stroke="#1a1a1a" stroke-width="1.200"></path><path d="M9.500 5.500q1.800 2.500 0 5" fill="none" stroke="#333" stroke-width="1.200"></path><path d="M11.500 4q2.800 4 0 8M13.500 2.500q4 5.500 0 11" fill="none" stroke="#a8a8a8" stroke-width="1.200"></path></svg></button>
        <div class="clock"><time>14:45</time><time>13/10/2023</time></div>
      </div>
    `;
  }
}

@customElement("app-root")
class AppRoot extends LitElement {
  static styles = css`
    :host { display: flex; flex-direction: column; box-sizing: border-box; min-height: 100vh; background: #0b1215; border-top: 2px solid #e6e9ea; }
    chat-panel { flex: 1; margin: 14px 72px 14px 0; }
  `;
  render() {
    return html`<chat-panel></chat-panel><task-bar></task-bar>`;
  }
}
